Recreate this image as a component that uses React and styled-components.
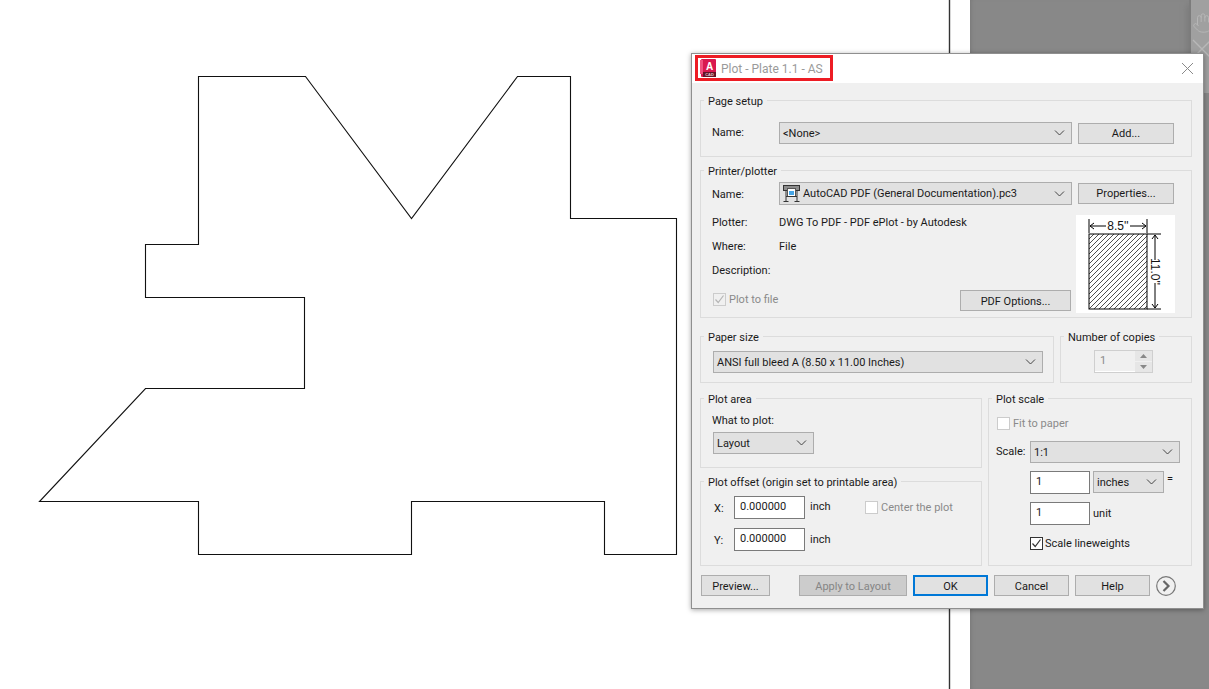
import styled, { createGlobalStyle } from "styled-components"
import { Hand } from "lucide-react"

// ============================== Style  ==============================
const GlobalStyle = createGlobalStyle`
    html, body {
        margin: 0;
        padding: 0;
        overflow: hidden;
        background: #fff;
    }
    #root {
        width: 1209px;
        height: 689px;
    }
`

const Workspace = styled.div`
    position: relative;
    display: flex;
    width: 1209px;
    height: 689px;
    overflow: hidden;
    font-family: Roboto, "Liberation Sans", sans-serif;
    font-size: 11px;
    color: #1a1a1a;
`

const Sheet = styled.div`
    width: 970px;
    background: #fff;
`

const Backdrop = styled.div`
    flex: 1;
    display: flex;
    justify-content: flex-end;
    align-items: flex-start;
    background: #888888;
    box-shadow: inset 4px 0 4px -3px #777;
`

const NavBar = styled.div`
    flex: none;
    box-sizing: border-box;
    width: 20px;
    height: 93px;
    padding: 12px 0 0 1px;
    display: flex;
    flex-direction: column;
    gap: 5px;
    overflow: hidden;
    background: #a0a0a0;
    border-left: 2px solid #7c7c7c;
    box-shadow: -6px 0 6px -4px #7a7a7a;
    color: #b8b8b8;
`

const Dialog = styled.div`
    position: absolute;
    left: 691px;
    top: 53px;
    width: 513px;
    box-sizing: border-box;
    border: 1px solid #8f8f8f;
    background: #f0f0f0;
    box-shadow: 0 1px 5px rgba(0, 0, 0, 0.35);
`

const TitleBar = styled.div`
    position: relative;
    height: 29px;
    display: flex;
    align-items: center;
    gap: 4px;
    padding: 0 9px 0 8px;
    background: #fff;
    color: #9a9a9a;
    font-size: 12px;
`

const TitleText = styled.span`
    flex: 1;
`

const Highlight = styled.div`
    position: absolute;
    left: 3px;
    top: 1px;
    width: 138px;
    height: 26px;
    box-sizing: border-box;
    border: 3px solid #ed1c24;
`

const Body = styled.div`
    display: flex;
    flex-direction: column;
    padding: 17px 11px 12px 8px;
`

const Group = styled.div`
    position: relative;
    box-sizing: border-box;
    height: ${(p) => p.$h}px;
    width: ${(p) => (p.$w ? `${p.$w}px` : "auto")};
    margin-top: ${(p) => p.$mt || 0}px;
    padding: ${(p) => p.$pad};
    border: 1px solid #dcdcdc;
`

const Legend = styled.span`
    position: absolute;
    left: 3px;
    top: -7px;
    padding: 0 4px;
    line-height: 16px;
    background: #f0f0f0;
`

const Row = styled.div`
    display: flex;
    align-items: ${(p) => p.$align || "center"};
    gap: ${(p) => p.$gap || 0}px;
    margin-top: ${(p) => p.$mt || 0}px;
    margin-left: ${(p) => p.$ml || 0}px;
`

const Label = styled.span`
    flex: none;
    box-sizing: border-box;
    width: ${(p) => (p.$w ? `${p.$w}px` : "auto")};
    line-height: 16px;
    padding-left: ${(p) => p.$pl || 0}px;
    padding-top: ${(p) => p.$pt || 0}px;
    padding-bottom: ${(p) => p.$pb || 0}px;
    color: ${(p) => (p.$off ? "#8a8a8a" : "inherit")};
`

const Combo = styled.div`
    flex: none;
    box-sizing: border-box;
    width: ${(p) => p.$w}px;
    height: ${(p) => p.$h || 22}px;
    display: flex;
    align-items: center;
    gap: 3px;
    padding: 0 6px 0 3px;
    border: 1px solid #adadad;
    background: #e1e1e1;
    white-space: nowrap;

    svg.chev {
        margin-left: auto;
        flex: none;
    }
`

const Btn = styled.div`
    flex: none;
    box-sizing: border-box;
    width: ${(p) => p.$w}px;
    height: ${(p) => p.$h || 21}px;
    margin-left: ${(p) => p.$ml || 0};
    padding-top: ${(p) => p.$pt || 0}px;
    display: flex;
    align-items: center;
    justify-content: center;
    border: 1px solid ${(p) => (p.$primary ? "#0078d7" : "#adadad")};
    border-width: ${(p) => (p.$primary ? 2 : 1)}px;
    background: ${(p) => (p.$off ? "#cccccc" : "#e1e1e1")};
    color: ${(p) => (p.$off ? "#858585" : "inherit")};
`

const Field = styled.div`
    flex: none;
    box-sizing: border-box;
    width: ${(p) => p.$w}px;
    height: 23px;
    padding: 0 0 2px 5px;
    display: flex;
    align-items: center;
    border: 1px solid #7a7a7a;
    background: #fff;
`

const Check = styled.span`
    flex: none;
    box-sizing: border-box;
    width: 13px;
    height: 13px;
    display: flex;
    align-items: center;
    justify-content: center;
    border: 1px solid ${(p) => (p.$off ? "#cccccc" : "#333333")};
    background: ${(p) => (p.$fill ? "#f0f0f0" : "#fff")};
`

const InfoList = styled.div`
    display: flex;
    flex-direction: column;
`

const InfoLine = styled.div`
    box-sizing: border-box;
    display: flex;
    align-items: center;
    height: 24px;
    padding-top: 1px;
`

const PreviewBox = styled.div`
    flex: none;
    width: 99px;
    height: 98px;
    margin: 5px 0 0 5px;
    background: #fff;
`

const Spinner = styled.div`
    width: 59px;
    height: 23px;
    margin-left: 33px;
    display: flex;
    box-sizing: border-box;
    border: 1px solid #cfcfcf;
    color: #8a8a8a;
`

const SpinValue = styled.span`
    flex: 1;
    padding: 1px 0 0 5px;
    line-height: 18px;
    background: #f0f0f0;
    border-bottom: 1px solid #fff;
`

const SpinArrows = styled.div`
    width: 17px;
    display: flex;
    flex-direction: column;
    gap: 1px;
    background: #f0f0f0;
`

const SpinArrow = styled.div`
    flex: 1;
    display: flex;
    align-items: center;
    justify-content: center;
    background: #e6e6e6;
`

const Columns = styled.div`
    display: flex;
    gap: 6px;
    margin-top: ${(p) => p.$mt || 0}px;
`

const Stack = styled.div`
    display: flex;
    flex-direction: column;
    width: ${(p) => p.$w}px;
`

const Footer = styled.div`
    display: flex;
    align-items: center;
    gap: 6px;
    margin: 9px 0 0 1px;
`

const CircleBtn = styled.div`
    flex: none;
    width: 20px;
    height: 20px;
`

// ============================== Icons  ==============================
function Chevron() {
    return (
        <svg className="chev" width="11" height="6" viewBox="0 0 11 6">
            <polyline points="1,0.5 5.5,5 10,0.5" fill="none" stroke="#444" strokeWidth="1" />
        </svg>
    )
}

function Tick({ color = "#333" }) {
    return (
        <svg width="11" height="11" viewBox="0 0 11 11">
            <polyline points="1.5,5.5 4.2,8.5 9.5,1.5" fill="none" stroke={color} strokeWidth="1.2" />
        </svg>
    )
}

function AppLogo() {
    return (
        <svg width="17" height="19" viewBox="0 0 17 19">
            <rect x="1" y="0" width="15" height="18" rx="1" fill="#d9184f" />
            <rect x="0" y="1" width="3" height="14" fill="#f0507f" />
            <rect x="3" y="13" width="13" height="5" fill="#641427" />
            <text x="9.5" y="10.5" fontSize="10" fontWeight="700" fill="#fff" textAnchor="middle" fontFamily="Liberation Sans">A</text>
            <text x="9.5" y="17" fontSize="4" fontWeight="700" fill="#e6c9d2" textAnchor="middle" fontFamily="Liberation Sans">CAD</text>
        </svg>
    )
}

function PrinterIcon() {
    return (
        <svg width="17" height="18" viewBox="0 0 17 18" style={{ flex: "none" }}>
            <rect x="0.5" y="0.5" width="16" height="5" fill="#8c8c8c" stroke="#333" />
            <rect x="4.5" y="3.5" width="8" height="8" fill="#fff" stroke="#555" />
            <rect x="6" y="6" width="5" height="4" fill="#45a5e6" />
            <path d="M3 6V16M14 6V16M3 11.5H14M0.5 16.5H5.5M11.5 16.5H16.5" fill="none" stroke="#333" />
        </svg>
    )
}

function PagePreview() {
    const hatch = []
    for (let i = -75; i < 58; i += 5) {
        hatch.push(<line key={i} x1={13 + i} y1="94" x2={13 + i + 75} y2="19" stroke="#222" strokeWidth="0.8" />)
    }
    return (
        <svg width="99" height="98" viewBox="0 0 99 98">
            <defs>
                <clipPath id="sheetClip">
                    <rect x="13" y="19" width="58" height="75" />
                </clipPath>
            </defs>
            <g clipPath="url(#sheetClip)">{hatch}</g>
            <rect x="13" y="19" width="58" height="75" fill="none" stroke="#000" strokeWidth="1" />
            <path d="M13 4V18M71 4V18M14 11H30M54 11H70M71 19H85M71 94H85M79 20V45M79 68V93" fill="none" stroke="#000" />
            <path d="M18 8L14 11L18 14M66 8L70 11L66 14M76 24L79 20L82 24M76 89L79 93L82 89" fill="none" stroke="#000" />
            <text x="42" y="15" fontSize="12" textAnchor="middle" fontFamily="Liberation Sans" fill="#111">8.5''</text>
            <text transform="translate(74.5 56.5) rotate(90)" fontSize="12" textAnchor="middle" fontFamily="Liberation Sans" fill="#111">11.0''</text>
        </svg>
    )
}

function NextCircle() {
    return (
        <svg width="20" height="20" viewBox="0 0 20 20">
            <circle cx="10" cy="10" r="9.3" fill="none" stroke="#777" strokeWidth="1.2" />
            <polyline points="7.5,5 12.5,10 7.5,15" fill="none" stroke="#666" strokeWidth="2.2" />
        </svg>
    )
}

const OUTLINE = "198,76 305,76 411,218 517,76 570,76 570,218 676,218 676,554 604,554 604,501 411,501 411,554 198,554 198,501 39,501 145,388 304,388 304,297 145,297 145,244 198,244"

export default function App() {
    return (
        <>
            <GlobalStyle />
            <Workspace>
                <Sheet>
                    <svg width="970" height="689" viewBox="0 0 970 689">
                        <polygon points={OUTLINE} transform="translate(0.5 0.5)" fill="none" stroke="#111" strokeWidth="1.1" />
                        <line x1="949.5" y1="0" x2="949.5" y2="689" stroke="#333" strokeWidth="1.4" />
                    </svg>
                </Sheet>
                <Backdrop>
                    <NavBar>
                        <Hand size={22} strokeWidth={1} style={{ flex: "none" }} />
                        <svg width="20" height="20" viewBox="0 0 20 20" style={{ flex: "none" }}>
                            <path d="M1 1L19 19M19 1L1 19" stroke="#b8b8b8" strokeWidth="1.4" />
                        </svg>
                    </NavBar>
                </Backdrop>

                <Dialog>
                    <TitleBar>
                        <AppLogo />
                        <TitleText>Plot - Plate 1.1 - AS</TitleText>
                        <svg width="13" height="13" viewBox="0 0 13 13">
                            <path d="M1 1L12 12M12 1L1 12" stroke="#8a8a8a" strokeWidth="1" />
                        </svg>
                        <Highlight />
                    </TitleBar>

                    <Body>
                        <Group $h={57} $pad="21px 0 0 11px">
                            <Legend>Page setup</Legend>
                            <Row>
                                <Label $w={67}>Name:</Label>
                                <Combo $w={293}><span>&lt;None&gt;</span><Chevron /></Combo>
                                <Btn $w={96} $ml="6px">Add...</Btn>
                            </Row>
                        </Group>

                        <Group $h={148} $mt={13} $pad="11px 0 0 11px">
                            <Legend>Printer/plotter</Legend>
                            <Row>
                                <Label $w={67} $pt={2}>Name:</Label>
                                <Combo $w={293} $h={23}>
                                    <PrinterIcon />
                                    <span>AutoCAD PDF (General Documentation).pc3</span>
                                    <Chevron />
                                </Combo>
                                <Btn $w={96} $ml="6px">Properties...</Btn>
                            </Row>
                            <Row $align="flex-start" $mt={5}>
                                <Stack $w={359}>
                                    <InfoList>
                                        <InfoLine><Label $w={67}>Plotter:</Label><span>DWG To PDF - PDF ePlot - by Autodesk</span></InfoLine>
                                        <InfoLine><Label $w={67}>Where:</Label><span>File</span></InfoLine>
                                        <InfoLine><Label $w={67}>Description:</Label></InfoLine>
                                    </InfoList>
                                    <Row $mt={8} $align="flex-start">
                                        <Row $gap={3} $ml={1} $mt={1}>
                                            <Check $off $fill><Tick color="#b5b5b5" /></Check>
                                            <Label $off $pt={1}>Plot to file</Label>
                                        </Row>
                                        <Btn $w={111} $ml="auto" $pt={2}>PDF Options...</Btn>
                                    </Row>
                                </Stack>
                                <PreviewBox><PagePreview /></PreviewBox>
                            </Row>
                        </Group>

                        <Columns $mt={18}>
                            <Group $w={354} $h={47} $pad="14px 0 0 12px">
                                <Legend>Paper size</Legend>
                                <Combo $w={330}><span>ANSI full bleed A (8.50 x 11.00 Inches)</span><Chevron /></Combo>
                            </Group>
                            <Group $w={132} $h={47} $pad="13px 0 0 0">
                                <Legend>Number of copies</Legend>
                                <Spinner>
                                    <SpinValue>1</SpinValue>
                                    <SpinArrows>
                                        <SpinArrow><svg width="7" height="4"><polygon points="3.5,0 7,4 0,4" fill="#888" /></svg></SpinArrow>
                                        <SpinArrow><svg width="7" height="4"><polygon points="0,0 7,0 3.5,4" fill="#888" /></svg></SpinArrow>
                                    </SpinArrows>
                                </Spinner>
                            </Group>
                        </Columns>

                        <Columns $mt={15}>
                            <Stack $w={282}>
                                <Group $h={70} $pad="14px 0 0 11px">
                                    <Legend>Plot area</Legend>
                                    <Label>What to plot:</Label>
                                    <Row $mt={3} $ml={1}>
                                        <Combo $w={101}><span>Layout</span><Chevron /></Combo>
                                    </Row>
                                </Group>
                                <Group $h={85} $mt={13} $pad="14px 0 0 12px">
                                    <Legend>Plot offset (origin set to printable area)</Legend>
                                    <Row>
                                        <Label $w={21} $pl={1} $pt={3}>X:</Label>
                                        <Field $w={71}>0.000000</Field>
                                        <Label $w={60} $pl={5} $pb={1}>inch</Label>
                                        <Row $gap={3}>
                                            <Check $off />
                                            <Label $off $pt={1}>Center the plot</Label>
                                        </Row>
                                    </Row>
                                    <Row $mt={9}>
                                        <Label $w={21} $pl={1} $pt={3}>Y:</Label>
                                        <Field $w={71}>0.000000</Field>
                                        <Label $w={60} $pl={5}>inch</Label>
                                    </Row>
                                </Group>
                            </Stack>

                            <Group $w={204} $h={168} $pad="15px 0 0 7px">
                                <Legend>Plot scale</Legend>
                                <Row $gap={3} $ml={1}>
                                    <Check $off />
                                    <Label $off $pt={2}>Fit to paper</Label>
                                </Row>
                                <Row $mt={9}>
                                    <Label $w={34}>Scale:</Label>
                                    <Combo $w={150}><span>1:1</span><Chevron /></Combo>
                                </Row>
                                <Row $mt={8} $ml={34} $gap={3} $align="flex-start">
                                    <Field $w={60}>1</Field>
                                    <Combo $w={71}><span>inches</span><Chevron /></Combo>
                                    <Label>=</Label>
                                </Row>
                                <Row $mt={8} $ml={34} $gap={3}>
                                    <Field $w={60}>1</Field>
                                    <Label>unit</Label>
                                </Row>
                                <Row $mt={10} $ml={34} $gap={2}>
                                    <Check><Tick /></Check>
                                    <Label $pt={1}>Scale lineweights</Label>
                                </Row>
                            </Group>
                        </Columns>

                        <Footer>
                            <Btn $w={69} $pt={2}>Preview...</Btn>
                            <Btn $w={108} $off $ml="23px" $pt={2}>Apply to Layout</Btn>
                            <Btn $w={75} $primary $pt={2}>OK</Btn>
                            <Btn $w={75} $pt={2}>Cancel</Btn>
                            <Btn $w={75} $pt={2}>Help</Btn>
                            <CircleBtn><NextCircle /></CircleBtn>
                        </Footer>
                    </Body>
                </Dialog>
            </Workspace>
        </>
    )
}
